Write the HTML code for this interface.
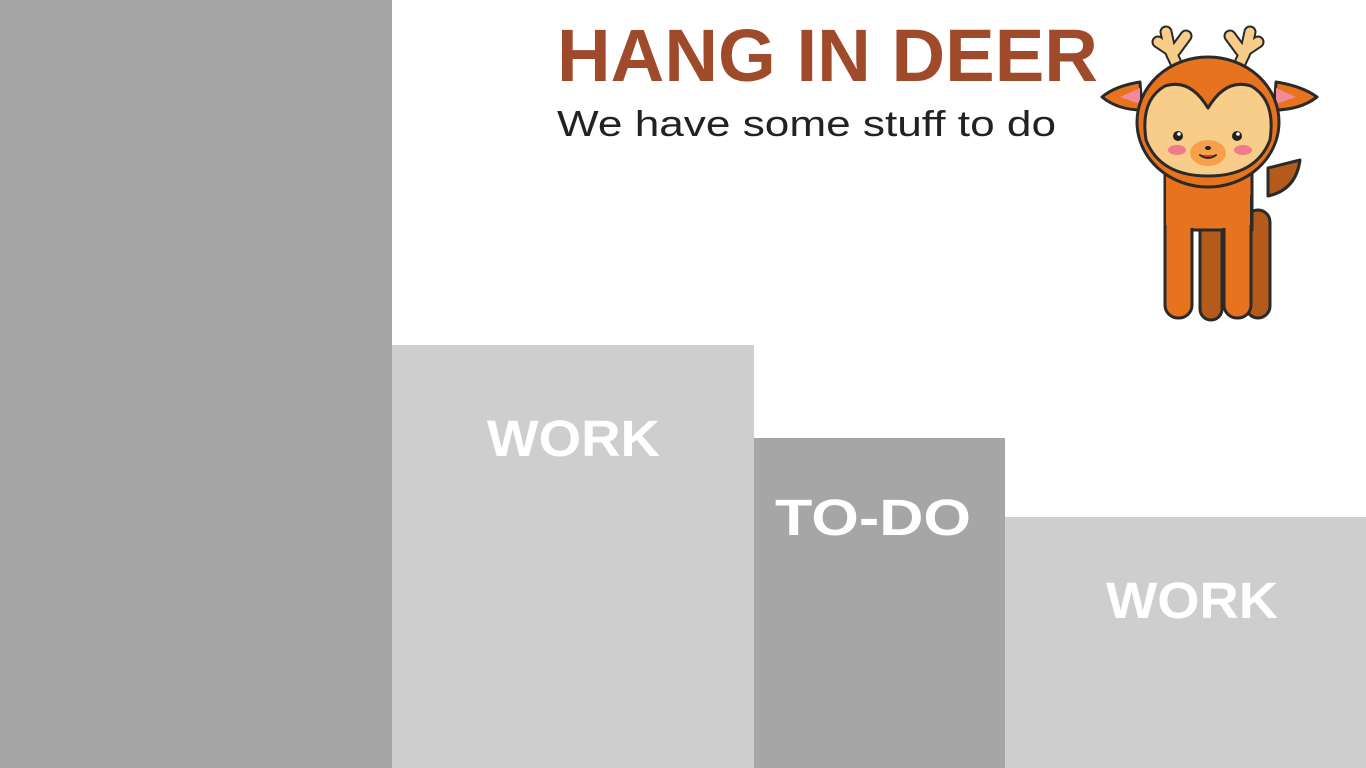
<!DOCTYPE html>
<html><head><meta charset="utf-8"><style>
html,body{margin:0;padding:0;width:1366px;height:768px;overflow:hidden;background:#fff}
svg{display:block}
</style></head><body>
<svg width="1366" height="768" viewBox="0 0 1366 768" xmlns="http://www.w3.org/2000/svg">
<rect width="1366" height="768" fill="#fff"/>
<rect x="0" y="0" width="392" height="768" fill="#a6a6a6"/>
<rect x="392" y="345" width="362" height="423" fill="#cecece"/>
<rect x="754" y="438" width="251" height="330" fill="#a6a6a6"/>
<rect x="1005" y="517" width="361" height="251" fill="#cecece"/>
<g font-family="Liberation Sans, sans-serif" font-weight="bold" fill="#fff">
<text x="487" y="456" font-size="51" textLength="173" lengthAdjust="spacingAndGlyphs">WORK</text>
<text x="775" y="535" font-size="51" textLength="196" lengthAdjust="spacingAndGlyphs">TO-DO</text>
<text x="1106" y="618" font-size="51" textLength="172" lengthAdjust="spacingAndGlyphs">WORK</text>
</g>
<text x="557" y="81" font-family="Liberation Sans, sans-serif" font-weight="bold" font-size="74" fill="#a04a2c" textLength="541" lengthAdjust="spacingAndGlyphs">HANG IN DEER</text>
<text x="557" y="136" font-family="Liberation Sans, sans-serif" font-size="36" fill="#222" textLength="499" lengthAdjust="spacingAndGlyphs">We have some stuff to do</text>
<g stroke="#2a2a2a" stroke-width="3" stroke-linejoin="round" stroke-linecap="round">
<path d="M1180 72 L1170 50 L1158 42 M1170 50 L1166 32 M1172 55 L1186 36" stroke="#2a2a2a" stroke-width="13" fill="none"/>
<path d="M1180 72 L1170 50 L1158 42 M1170 50 L1166 32 M1172 55 L1186 36" stroke="#f8cd8a" stroke-width="9" fill="none"/>
<path d="M1236 72 L1246 50 L1258 42 M1246 50 L1250 32 M1244 55 L1230 36" stroke="#2a2a2a" stroke-width="13" fill="none"/>
<path d="M1236 72 L1246 50 L1258 42 M1246 50 L1250 32 M1244 55 L1230 36" stroke="#f8cd8a" stroke-width="9" fill="none"/>
<path d="M1268 168 L1300 160 Q1296 190 1268 196 Z" fill="#b45a1a"/>
<rect x="1200" y="220" width="22" height="100" rx="11" fill="#b45a1a"/>
<rect x="1246" y="210" width="24" height="108" rx="12" fill="#b45a1a"/>
<path d="M1165 170 L1252 170 L1252 230 L1165 230 Z" fill="#e8731e"/>
<rect x="1165" y="190" width="27" height="128" rx="13" fill="#e8731e"/>
<rect x="1224" y="190" width="27" height="128" rx="13" fill="#e8731e"/>
<path d="M1166 175 L1250 175 L1250 225 Q1208 232 1166 225 Z" fill="#e8731e" stroke="none"/>
<path d="M1140 82 Q1115 86 1102 97 Q1118 110 1142 110 Z" fill="#e8731e"/>
<path d="M1276 82 Q1302 86 1317 97 Q1300 110 1274 110 Z" fill="#e8731e"/>
<path d="M1140 88 L1120 97 L1140 104 Z" fill="#f28a9a" stroke="none"/>
<path d="M1276 88 L1296 97 L1276 104 Z" fill="#f28a9a" stroke="none"/>
<ellipse cx="1208" cy="122" rx="71" ry="65" fill="#e8731e"/>
<path d="M1208 108 Q1190 78 1165 86 Q1140 100 1146 140 Q1160 176 1208 176 Q1256 176 1270 140 Q1276 100 1251 86 Q1226 78 1208 108 Z" fill="#f8cd8a"/>
<ellipse cx="1208" cy="153" rx="18" ry="13" fill="#f6a04a" stroke="none"/>
<ellipse cx="1177" cy="150" rx="9" ry="5" fill="#f07a8a" stroke="none"/>
<ellipse cx="1243" cy="150" rx="9" ry="5" fill="#f07a8a" stroke="none"/>
<circle cx="1178" cy="136" r="5" fill="#222" stroke="none"/>
<circle cx="1237" cy="136" r="5" fill="#222" stroke="none"/>
<circle cx="1179" cy="134" r="1.8" fill="#fff" stroke="none"/>
<circle cx="1238" cy="134" r="1.8" fill="#fff" stroke="none"/>
<ellipse cx="1208" cy="148" rx="3" ry="2" fill="#222" stroke="none"/>
<path d="M1200 155 Q1208 161 1216 155" fill="#e33" stroke-width="2"/>
</g>
</svg>
</body></html>
